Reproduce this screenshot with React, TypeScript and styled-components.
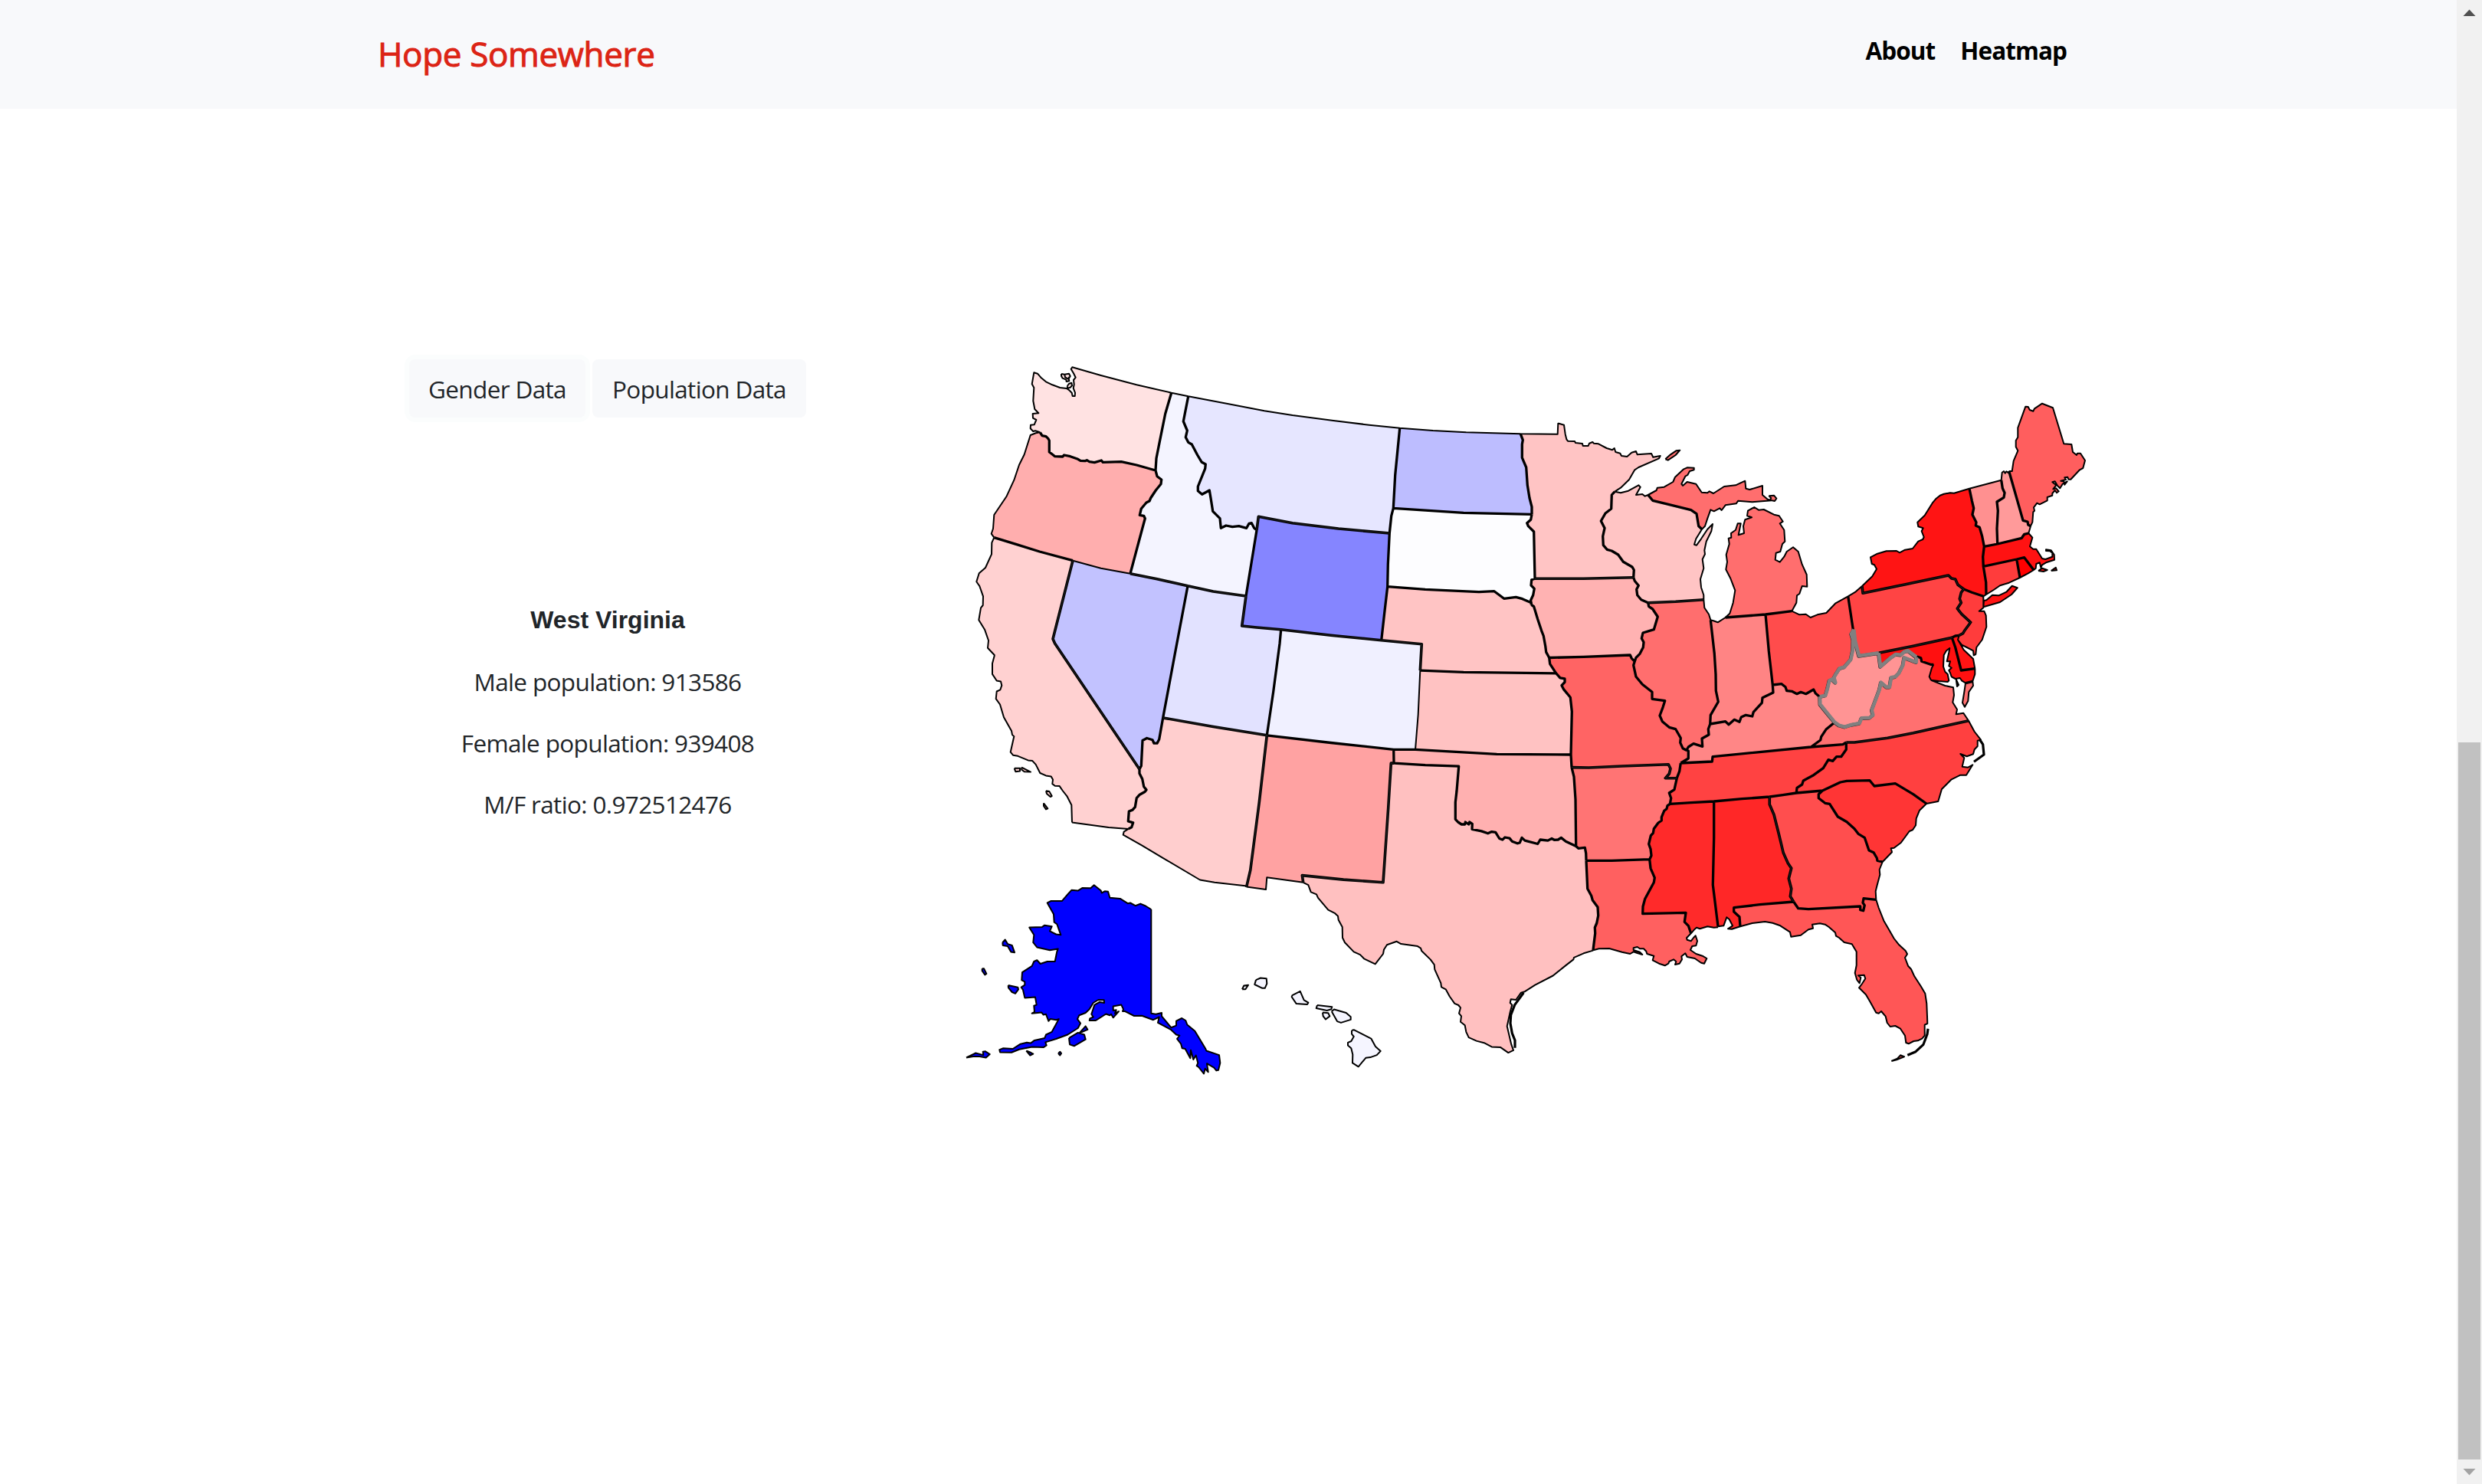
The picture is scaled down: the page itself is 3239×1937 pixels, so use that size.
import React from "react";
import styled, { createGlobalStyle } from "styled-components";

/* ------------------------------------------------------------------ */
/* Map data: shared borders are stored once, as arcs on survey sheets. */
/* ------------------------------------------------------------------ */

type Sheet = { x: number; y: number; sx: number; sy: number };

const TALL = 1568 / 580;

/* Origin and units-per-pixel of each sheet that an arc may refer to. */
const sheets: Record<string, Sheet> = {
  A: { x: 1250, y: 460, sx: 3, sy: 3 },
  B: { x: 1250, y: 840, sx: 3, sy: TALL },
  C: { x: 1620, y: 460, sx: 3, sy: 3 },
  D: { x: 1620, y: 840, sx: 3, sy: TALL },
  E: { x: 2000, y: 520, sx: 3, sy: 3 },
  F: { x: 2040, y: 880, sx: 3, sy: 3 },
  G: { x: 2360, y: 500, sx: 3, sy: 3 },
  H: { x: 2330, y: 820, sx: 3, sy: 3 },
  I: { x: 2420, y: 1080, sx: 3, sy: 3 },
};

/* Outer edges and coast lines. */
const coasts: Record<string, string> = {
  wa: "A 836,158 700,127 560,90 448,58 443,65 453,82 461,98 453,108 455,125 452,140 459,158 458,171 449,171 446,158 438,150 432,145 425,141 400,138 370,127 345,115 325,98 312,83 298,79 290,124 298,138 295,190 301,222 316,238 293,240 294,257 307,264 299,283 285,284 284,298 295,309 303,307 322,313",
  waIsle1: "A 405,84 418,86 435,83 440,93 434,103 436,112 425,114 424,107 410,101 405,92 405,84",
  waIsle2: "A 418,86 420,97 432,104 436,96",
  waIsle3: "A 428,132 436,122 445,119 447,130 440,137 430,140 428,132",
  or: "A 322,313 305,316 284,324 260,400 240,440 220,500 190,565 142,636 138,690 131,710 142,725",
  orNv: "A 450,815 560,845 675,866",
  idN: "A 836,158 902,172",
  ca: "A 142,725 133,745 132,790 108,843 83,865 73,898 85,915 99,955 98,990 90,1000 82,1048 105,1085 120,1128 117,1157 143,1185 B 143,43 135,70 135,108 152,131 168,134 172,148 166,163 152,169 149,195 165,215 180,260 210,308 213,322 220,328 206,383 216,394 235,397 275,412 292,414 305,427 322,457 345,466 365,469 372,480 370,495 380,502 398,503 410,519 428,540 445,570 447,631",
  caMex: "B 447,631 590,649 668,654",
  caIsle1: "B 221,440 243,440 243,450 226,452 221,440",
  caIsle2: "B 250,437 285,453 260,452 250,445 250,437",
  caIsle3: "B 345,520 358,522 368,538 362,541 348,530 345,520",
  caIsle4: "B 336,563 352,582 345,585 336,573 336,563",
  az: "B 668,654 650,664 647,675 720,712 800,755 948,834 1005,843 1125,855 D 20,858",
  mtN: "A 902,172 1060,202 1200,229 C 200,246 360,267 500,284 620,296",
  ndN: "C 620,296 750,306 880,313 1093,319",
  mn: "C 1093,319 1238,320 1240,278 E 103,98 123,104 128,140 133,160 138,167 165,168 168,174 195,177 197,186 218,186 222,176 235,171 240,176 258,178 290,195 312,202 320,195 325,210 343,215 348,225 370,228 388,212 405,207 410,220 465,216 472,230 500,225 495,235 415,270 400,280 378,318 345,350 322,365",
  coKs: "D 700,95 692,250 681,374",
  nmMex: "D 20,858 96,868 100,825 242,843",
  tx: "D 242,843 262,852 272,877 294,885 300,897 340,940 365,951 378,962 380,975 395,1000 396,1038 405,1055 440,1088 465,1098 480,1112 524,1131 555,1095 558,1080 570,1063 608,1051 625,1060 690,1068 702,1075 706,1085 740,1115 755,1133 757,1150 781,1198 783,1212 800,1220 815,1245 835,1270 850,1276 858,1285 852,1305 861,1315 858,1335 875,1347 880,1370 890,1390 920,1402 950,1409 980,1423 1015,1425 1045,1444 1065,1435 1057,1415 1040,1350 1052,1300 1060,1275 1052,1268 1055,1255 1075,1257 1095,1232 1110,1228 1150,1205 1220,1172 1268,1137 1300,1115 1302,1108 1340,1093 1377,1083",
  wiSup: "E 322,365 345,370 375,362 415,340 422,347 405,378 430,375 440,383 452,378",
  wi: "E 663,512 640,550 633,572 642,575 660,550 685,512 705,492 700,520 680,560 673,595 675,610 665,630 670,665 657,708 660,740 670,770 670,788",
  il: "E 670,788 673,820 690,845 697,868",
  in: "E 697,868 708,871 725,877 755,858",
  mi: "E 755,858 772,842 785,800 793,752 775,705 757,670 762,640 758,612 770,570 767,548 778,545 777,528 795,515 803,490 815,490 806,535 828,528 825,500 832,475 858,466 840,460 843,440 868,426 885,437 905,435 945,455 965,460 980,482 968,490 985,515 988,560 978,570 970,600 953,605 950,632 968,641 985,620 995,600 1020,583 1040,600 1055,650 1073,690 1075,737 1055,735 1045,765 1035,772 1033,800 1015,833",
  miUp: "E 452,378 485,360 488,350 515,347 550,327 558,308 590,278 605,271 632,272 632,280 615,285 607,300 598,305 583,335 588,342 605,327 640,335 662,368 685,370 692,364 708,372 750,345 795,340 832,323 835,353 850,357 900,342 900,378 920,395 935,400 860,406 805,401 797,412 755,418 740,438 733,430 710,442 697,436 685,470 675,500 663,512",
  miIsle: "E 925,382 945,380 955,392 948,402 930,398 934,390 925,382",
  royale: "E 520,238 540,220 562,205 577,203 560,222 530,242 520,238",
  oh: "E 1015,833 1045,847 1070,845 1088,858 G 35,907 70,900 105,863 155,835",
  paLake: "G 155,835 185,817 210,795",
  nyLake: "G 210,795 250,757 267,728 258,712 248,708 243,682 270,668 305,658 345,657 357,664 378,653 408,648 430,620 448,612 452,603 443,580 449,568 430,562 427,545 455,518 485,470 500,452 515,440 530,434 555,430 570,431 630,413",
  nySound: "G 696,828 685,835",
  longIsland: "G 685,877 687,852 697,850 720,830 745,832 775,818 797,794 818,802 795,828 750,858 685,877",
  vtN: "G 630,413 755,380",
  nhN: "G 755,380 758,350 765,345 770,353 775,346 783,352 785,345",
  nh: "G 870,560 862,588",
  me: "G 785,345 797,345 803,305 820,265 812,250 812,225 820,212 820,175 850,92 860,93 866,105 880,110 885,100 915,80 957,97 1000,238 1030,240 1035,270 1050,282 1053,275 1065,275 1083,303 1075,333 1062,340 1027,377 1018,377 1015,368 1003,370 1008,378 988,383 1000,385 1003,398 1013,385 995,395 985,412 975,402 965,385 955,388 970,400 958,415 970,412 980,424 972,430 965,420 955,432 955,440 935,447 935,460 905,475 895,470 882,487 885,500 880,505 877,545 870,560",
  ma: "G 862,588 877,605 867,640 880,650 892,650 915,687 928,690 955,680 955,665 945,658 930,657 930,652 950,655 962,672 963,692 930,703 915,712 910,722 905,703 892,708 890,725 882,732",
  vineyard: "G 900,735 915,725 935,732 920,738 900,735",
  nantucket: "G 950,735 968,722 972,733 950,735",
  ri: "G 828,762 860,745 882,732",
  ct: "G 828,762 785,782 750,793 725,810 696,828",
  nj: "G 685,835 685,880 668,893 688,893 695,910 697,955 680,1005 658,1035 655,1062 647,1066 645,1048 620,1035 600,1025 585,1005 590,988",
  de: "H 680,28 675,45 698,85 735,120 742,158",
  mdSea: "H 742,158 742,180 733,208",
  vaSpit: "H 733,208 735,225 718,250 715,285 702,308 693,292 700,250 705,215 733,208",
  mdIsle: "H 668,200 678,222 672,228 668,200",
  mdBay: "H 706,215 690,205 683,195 665,198 650,190 645,175 640,165 650,155 640,148 645,130 632,130 640,95 643,78 630,88 620,105 618,150 625,170 635,180 640,205 635,210 600,207 570,203",
  potomac: "H 580,142 573,155 563,190 570,203",
  va: "H 570,203 625,225 657,232 660,262 655,290 672,318 668,337 697,332 717,362",
  nc: "H 552,687 598,678 612,630 650,592 685,575 708,575 733,535 715,545 692,542 700,508 685,492 710,502 735,493 740,475 752,462 752,440 765,437 740,405 717,362",
  sc: "I 110,135 147,97 143,82 155,80 182,60 215,15 H 498,790 510,772 512,745 525,713 552,687",
  ga: "I 110,135 98,165 100,185 88,230 83,250 85,283",
  fl: "I 85,283 95,315 115,365 135,400 155,435 175,460 200,483 207,496 198,510 210,542 222,555 235,583 260,622 277,650 283,690 285,740 286,768 275,773 275,815 265,827 248,835 232,837 212,847 202,843 198,815 180,788 160,777 140,780 128,765 122,740 105,720 95,728 85,725 60,680 45,655 18,628 30,612 43,592 38,578 15,580 25,588 20,610 10,597 2,570 8,540 8,487 F 1130,1057 1100,1050 1080,1032 1068,1025 1065,1012 1040,990 1025,980 1005,976 975,980 978,995 960,1000 930,1022 892,1028 888,1010 850,985 820,974 790,969 740,975 693,988",
  flKey: "I 145,915 168,905 180,892 195,898 165,910 145,915",
  al: "F 606,988 628,985 640,952 650,960 663,985 645,997 660,998 693,988",
  ms: "F 500,1015 515,998 522,992 535,997 565,988 590,992 606,991",
  la: "F 117,1081 140,1075 180,1074 230,1088 262,1095 275,1087 290,1092 310,1098 300,1088 275,1080 275,1072 290,1068 300,1075 315,1075 325,1085 328,1095 355,1103 350,1120 375,1133 398,1141 412,1133 415,1125 432,1117 442,1125 438,1137 455,1133 465,1117 463,1105 478,1093 485,1107 515,1113 540,1130 552,1133 562,1113 545,1103 520,1095 498,1080 505,1065 520,1063 525,1045 518,1024 510,1032 500,1045 485,1040 483,1033 500,1015",
  ak: "B 757,938 757,1305 775,1308 798,1303 798,1315 835,1355 855,1348 855,1332 877,1322 892,1330 898,1345 928,1367 970,1430 973,1437 1023,1452 1027,1480 1020,1505 1012,1507 1003,1497 975,1482 980,1512 968,1500 963,1518 943,1495 935,1490 940,1480 932,1453 922,1468 912,1435 910,1463 890,1430 878,1428 873,1412 858,1395 868,1383 855,1380 835,1363 783,1338 788,1318 765,1328 720,1313 690,1314 655,1298 645,1298 648,1290 640,1275 608,1280 608,1295 620,1293 615,1305 630,1298 608,1320 600,1308 595,1312 580,1307 540,1330 515,1330 517,1323 530,1318 523,1308 535,1275 555,1265 573,1268 572,1258 550,1257 530,1268 515,1290 500,1303 475,1312 468,1325 480,1340 470,1357 430,1380 385,1395 343,1407 347,1418 335,1425 290,1423 240,1432 210,1443 165,1442 163,1433 178,1428 215,1430 245,1413 270,1408 285,1410 300,1400 340,1392 345,1380 368,1370 380,1350 395,1325 385,1328 362,1325 355,1332 345,1308 335,1310 328,1302 290,1305 300,1300 298,1278 308,1275 303,1248 262,1250 255,1222 248,1213 262,1205 262,1193 250,1188 252,1160 290,1138 298,1122 310,1117 323,1130 350,1122 380,1122 388,1087 392,1077 360,1082 310,1072 295,1055 298,1028 280,1002 330,1000 340,994 368,998 360,1015 385,1026 403,1028 388,990 377,983 375,955 350,915 365,908 408,908 430,885 445,870 470,872 488,862 520,863 533,852 560,872 563,880 575,874 588,875 595,897 635,900 665,917 675,915 695,925 715,918 735,926 757,938",
  akIsle1: "B 175,1055 185,1045 195,1060 212,1065 222,1090 208,1088 195,1068 176,1065 175,1055",
  akIsle2: "B 95,1147 102,1147 112,1165 106,1169 95,1155 95,1147",
  akIsle3: "B 197,1206 235,1213 237,1220 225,1235 212,1230 198,1215 197,1206",
  akIsle4: "B 435,1392 470,1373 495,1380 500,1397 455,1420 438,1415 435,1392",
  akIsle5: "B 475,1375 500,1350 508,1362 475,1375",
  akIsle6: "B 393,1446 400,1440 405,1446 400,1453 393,1446",
  akIsle7: "B 33,1461 70,1445 100,1452 98,1440 108,1439 125,1449 110,1461 85,1457 60,1457 33,1461",
  akIsle8: "B 268,1437 285,1443 295,1448 283,1453 268,1437",
  hi1: "D 3,1220 10,1207 27,1205 16,1220 3,1220",
  hi2: "D 57,1187 75,1180 98,1182 100,1200 92,1216 82,1216 52,1203 57,1187",
  hi3: "D 198,1242 230,1227 245,1258 262,1267 258,1273 235,1272 215,1271 197,1247 198,1242",
  hi4: "D 297,1276 355,1282 352,1290 335,1295 293,1287 297,1276",
  hi5: "D 318,1302 340,1304 346,1315 330,1326 320,1315 318,1302",
  hi6: "D 353,1298 363,1291 410,1303 428,1317 428,1327 390,1338 375,1333 353,1298",
  hi7: "D 432,1365 440,1363 508,1394 525,1422 545,1438 530,1452 505,1460 487,1462 458,1493 435,1480 436,1450 430,1428 417,1418 417,1408 430,1403 440,1387 432,1378 432,1365",
};

/* Borders between two states. */
const borders: Record<string, string> = {
  waOr: "A 322,313 330,326 345,329 354,338 358,345 358,390 366,396 380,407 410,408 416,402 440,407 470,418 480,424 498,425 505,422 515,428 535,431 562,423 568,430 640,428 700,441 774,462",
  waId: "A 836,158 812,240 790,350 777,415 774,462",
  orId: "A 774,462 780,485 797,498 795,515 775,540 755,570 750,582 738,588 718,612 712,637 728,640 733,650 722,690 702,765 675,866",
  orCa: "A 142,725 230,752 320,780 450,815",
  idMt: "A 902,172 883,270 898,306 892,332 902,352 916,360 938,402 955,430 970,438 968,455 940,525 940,542 956,556 985,540 990,570 998,622 1026,650 1030,688 1050,678 1075,683 1100,680 1130,688 1140,670 1150,668 1160,688 1170,696",
  idWy: "A 1170,696 1150,820 1128,954",
  caAz: "B 711,443 711,458 722,478 728,505 738,516 732,523 712,533 700,545 694,577 684,587 670,592 667,627 686,632 680,648 668,654",
  nvAz: "B 711,443 718,432 723,342 740,334 762,340 768,352 780,352 788,338 803,262",
  nvUt: "A 900,914 850,1180 B 803,262",
  utCo: "C 155,1085 D 150,0 125,170 100,324",
  sdWy: "C 580,708 574,830 572,917",
  wyNe: "C 572,917 560,1020 548,1127",
  mtSd: "C 595,610 587,640 580,708",
  mtNd: "C 620,296 602,480 595,610",
  ndMn: "C 1093,319 1102,343 1099,360 1099,412 1115,450 1120,520 1128,570 1137,605 1137,634",
  ndSd: "C 595,610 870,628 1137,634",
  sdMn: "C 1137,634 1133,655 1118,668 1123,680 1145,702 1147,790 1149,886",
  sdIa: "C 1149,886 1136,890 1134,912 1147,925 1142,950 1133,970 1135,988",
  sdNe: "C 572,917 720,928 930,938 990,935 1028,964 1075,958 1100,965 1135,980 1135,988",
  neIa: "C 1135,988 1145,995 1160,1045 1175,1090 1183,1110 1190,1150 D 1193,30 1205,50",
  neMo: "D 1205,50 1208,72 1232,105",
  neKs: "D 700,95 870,101 1232,105",
  coNm: "D 100,324 350,350 596,374",
  coOk: "D 596,374 681,374",
  ksOk: "D 681,374 1000,390 1290,392",
  ksMo: "D 1232,105 1248,121 1266,124 1266,136 1254,148 1262,162 1288,190 1294,240 1290,392",
  okMo: "D 1290,392 1293,437",
  okAr: "D 1293,437 1302,470 1308,550 1310,715",
  okNm: "D 596,374 597,422",
  okTx: "D 597,422 720,429 851,433 843,520 838,560 838,620 848,630 862,638 875,638 877,630 890,638 893,630 904,636 903,655 940,662 965,670 980,664 995,666 1010,688 1022,692 1032,684 1050,687 1060,698 1080,705 1090,703 1098,685 1110,695 1160,707 1170,692 1200,695 1215,688 1225,693 1240,692 1252,685 1270,698 1310,715",
  txAr: "D 1310,715 1320,723 1345,720 1349,740 1350,766",
  txLa: "D 1350,766 F 95,840 110,868 115,885 135,912 137,945 131,975 124,992 125,1015 120,1055 117,1081",
  arLa: "D 1350,766 F 190,730 338,725",
  moIl: "E 400,1030 395,1045 405,1090 430,1120 468,1150 F 348,97 398,104 390,130 378,162 388,185 415,208 440,215 460,250 458,268 468,290 482,298",
  moKy: "F 482,298 490,300 490,330 460,348",
  moTn: "F 460,348 455,380 445,407",
  tnAr: "F 445,407 435,452 415,465 422,485 418,508",
  tnMs: "F 418,508 500,503 590,498",
  tnAl: "F 590,498 700,488 808,480",
  tnGa: "F 808,480 860,473 913,465",
  gaNc: "F 913,465 1015,456",
  arMs: "F 418,508 408,515 405,527 395,535 385,560 385,573 372,582 355,605 352,622 343,632 335,665 342,685 345,710 338,725",
  laMs: "F 338,725 342,760 358,797 355,815 320,880 312,910 311,938 480,934 475,970 490,985 500,1015",
  msAl: "F 590,498 590,640 586,825 606,988",
  alFl: "F 693,988 690,950 668,930 668,914 770,902 902,891",
  gaFl: "F 902,891 920,917 960,920 1163,909 1163,923 1175,926 1180,905 1173,895 1176,878 I 85,283",
  gaSc: "F 1015,456 1000,470 1000,485 1025,505 1043,508 1075,558 1110,578 1140,605 1155,625 1180,640 1197,690 H 345,878 358,900 I 90,130 110,135",
  scNc: "F 1015,456 1085,423 H 240,598 330,596 348,618 430,608 500,650 552,687",
  tnNc: "H 238,447 238,475 218,503 200,503 185,520 168,515 148,548 110,575 70,597 65,612 45,625 F 913,465",
  tnVa: "H 100,465 225,455 238,447",
  tnKy: "F 460,348 583,342 585,323 H 100,465",
  vaKy: "H 100,465 137,438 140,425 160,395 193,368",
  kyOh: "F 820,42 855,38 870,50 875,65 895,67 915,77 930,70 950,77 980,60 988,75 H 133,268",
  kyIn: "F 575,195 635,185 648,197 670,178 690,187 697,168 715,160 740,165 745,148 778,112 780,92 822,72 820,42",
  inOh: "E 912,846 925,990 940,1122",
  kyIl: "F 482,298 490,285 510,272 545,283 543,252 570,237 568,215 575,195",
  ilIn: "F 575,195 577,160 607,108 598,65 597,0 E 712,1000 697,868",
  iaIl: "E 452,800 455,815 470,825 490,855 475,905 432,918 427,940 435,955 433,975 420,1000 405,1015 400,1030",
  wiIa: "E 395,701 400,715 415,733 407,748 410,770 425,788 452,800",
  iaMo: "D 1205,50 E 200,1012 382,1005 388,1018 400,1030",
  mnWi: "E 322,365 310,378 308,432 285,450 268,480 282,508 275,540 277,575 292,592 310,597 335,612 355,640 390,660 397,672 395,701",
  wiMi: "E 452,378 470,400 520,412 620,437 642,452 650,500 663,512",
  inMi: "E 755,858 912,846",
  ohMi: "E 912,846 1015,833",
  nyVt: "G 630,413 640,460 647,490 642,515 657,545 655,558 670,565 680,600 688,640",
  nyMa: "G 688,640 683,680 685,718",
  nyCt: "G 685,718 695,780 696,828",
  nyNj: "G 608,807 640,820 685,835",
  paDe: "G 562,997 575,990 590,988",
  deMd: "H 652,37 665,75 688,165 742,158",
  mdVaE: "H 733,208 706,215",
  mdVa: "H 513,110 530,116 533,130 568,142 580,142",
  vtNh: "G 755,380 760,412 768,430 765,448 738,465 742,500 738,570 740,630",
  vtMa: "G 688,640 740,630",
  nhMa: "G 740,630 835,607 845,592 862,588",
  nhMe: "G 785,345 840,538 858,543 860,555 870,560",
  maCt: "G 685,718 815,690",
  maRi: "G 815,690 845,683 882,732",
  ctRi: "G 815,690 828,762",
  ohPa: "G 155,835 175,965",
};

/* Borders where the two outlines run side by side and leave a sliver. */
const doubles: Record<string, string> = {
  nvId: "A 675,866 780,887 900,914",
  utId: "A 900,914 1000,936 1128,954",
  mtWy: "A 1170,696 1177,643 C 200,668 380,690 580,708",
  utWy: "A 1128,954 1112,1071 C 60,1077 155,1085",
  coWy: "C 155,1085 350,1108 548,1127",
  neCo: "C 548,1127 706,1142 D 700,95",
  caNv: "A 450,815 372,1122 380,1140 B 711,443",
  utAz: "B 803,262 1000,293 D 100,324",
  azNm: "D 100,324 70,560 35,800 20,858",
  nmTx: "D 597,422 586,422 575,580 555,843 400,833 238,818 242,843",
  iaMn: "C 1149,886 E 200,706 395,701",
  wiIl: "E 452,800 560,796 670,788",
  moAr: "D 1293,437 F 100,366 230,360 412,353 420,370 415,390 400,407 445,407",
  alGa: "F 808,480 808,510 825,550 845,630 862,700 880,740 893,760 883,800 893,840 889,870 902,891",
  paNy: "G 210,795 213,823 380,788 548,753 560,765 575,768 585,790 608,807",
  njPa: "G 608,807 598,820 592,845 598,860 583,883 600,905 635,937 612,968 605,980 590,988",
  mdPa: "H 365,97 500,70 652,37",
  ncVa: "H 238,447 270,447 400,430 500,410 717,362",
};

/* Outline of the state that is under the pointer. */
const selected: Record<string, string> = {
  wvKy: "H 193,368 155,322 136,298 135,268",
  wvOh: "H 135,268 157,263 165,235 172,205 182,200 196,213 190,193 197,180 212,157 230,152 256,122 264,85 265,45 258,22 268,5",
  wvPa: "H 268,5 273,50 288,108 365,97",
  wvMd: "H 365,97 372,150 410,117 432,102 452,104 465,92 480,88 513,113",
  wvVa: "H 513,113 512,133 465,115 460,145 445,175 430,190 414,193 408,230 395,230 374,212 368,240 338,320 343,340 330,350 298,352 290,372 258,378 232,386 210,380 193,368",
};

/* Sand bars and keys, which are all outline. */
const bars: string[] = [
  "D 1105,1232 1070,1275 1055,1310 1053,1340 1060,1375 1071,1400 1071,1427",
  "I 288,788 285,810 270,850 240,878 208,892",
  "H 760,435 773,455 777,495 738,523",
];

type State = { id: string; fill: string; rings: string[] };

/* A minus sign means that the arc is followed backwards. */
const states: State[] = [
  { id: "WA", fill: "#ffe2e2", rings: ["wa waOr -waId", "waIsle1", "waIsle3"] },
  { id: "OR", fill: "#ffaeae", rings: ["or orCa orNv -orId -waOr"] },
  { id: "CA", fill: "#ffd1d1", rings: ["ca caMex -caAz -caNv -orCa", "caIsle1", "caIsle2", "caIsle3", "caIsle4"] },
  { id: "NV", fill: "#c2c2ff", rings: ["orNv nvId nvUt -nvAz -caNv"] },
  { id: "ID", fill: "#f4f4ff", rings: ["idN idMt idWy -utId -nvId -orId -waId"] },
  { id: "MT", fill: "#e6e6ff", rings: ["mtN mtNd mtSd -mtWy -idMt"] },
  { id: "WY", fill: "#8585ff", rings: ["mtWy sdWy wyNe -coWy -utWy -idWy"] },
  { id: "UT", fill: "#e2e2ff", rings: ["utId utWy utCo -utAz -nvUt"] },
  { id: "CO", fill: "#f0f0ff", rings: ["coWy neCo coKs -coOk -coNm -utCo"] },
  { id: "AZ", fill: "#ffcece", rings: ["utAz azNm -az -caAz nvAz"] },
  { id: "NM", fill: "#ffa2a2", rings: ["coNm okNm nmTx -nmMex -azNm"] },
  { id: "ND", fill: "#bdbdff", rings: ["ndN ndMn -ndSd -mtNd"] },
  { id: "SD", fill: "#fdfdff", rings: ["ndSd sdMn sdIa -sdNe -sdWy -mtSd"] },
  { id: "NE", fill: "#ffc4c4", rings: ["sdNe neIa neMo -neKs -neCo -wyNe"] },
  { id: "KS", fill: "#ffc2c2", rings: ["neKs ksMo -ksOk -coKs"] },
  { id: "OK", fill: "#ffb0b0", rings: ["coOk ksOk okMo okAr -okTx -okNm"] },
  { id: "TX", fill: "#ffc0c0", rings: ["okTx txAr txLa -tx -nmTx"] },
  { id: "MN", fill: "#ffc4c4", rings: ["mn mnWi -iaMn -sdMn -ndMn"] },
  { id: "IA", fill: "#ffb2b2", rings: ["iaMn wiIa iaIl -iaMo -neIa -sdIa"] },
  { id: "MO", fill: "#ff6464", rings: ["iaMo moIl moKy moTn -moAr -okMo -ksMo -neMo"] },
  { id: "AR", fill: "#ff7474", rings: ["moAr tnAr arMs -arLa -txAr -okAr"] },
  { id: "LA", fill: "#ff6060", rings: ["arLa laMs -la -txLa"] },
  { id: "WI", fill: "#ffc4c4", rings: ["wiSup wiMi wi -wiIl -wiIa -mnWi"] },
  { id: "IL", fill: "#ff6e6e", rings: ["wiIl il -ilIn -kyIl -moIl -iaIl"] },
  { id: "MI", fill: "#ff6e6e", rings: ["mi -ohMi -inMi", "miUp -wiMi", "miIsle", "royale"] },
  { id: "IN", fill: "#ff8484", rings: ["in inMi inOh -kyIn ilIn"] },
  { id: "OH", fill: "#ff4c4c", rings: ["ohMi oh ohPa -wvOh -kyOh -inOh"] },
  { id: "KY", fill: "#ff8686", rings: ["kyIl kyIn kyOh -wvKy -vaKy -tnKy -moKy"] },
  { id: "TN", fill: "#ff4242", rings: ["tnKy tnVa tnNc -tnGa -tnAl -tnMs -tnAr -moTn"] },
  { id: "MS", fill: "#ff2a2a", rings: ["tnMs msAl -ms -laMs -arMs"] },
  { id: "AL", fill: "#ff2727", rings: ["tnAl alGa -alFl -al -msAl"] },
  { id: "GA", fill: "#ff4e4e", rings: ["tnGa gaNc gaSc ga -gaFl -alGa"] },
  { id: "FL", fill: "#ff5656", rings: ["alFl gaFl fl", "flKey"] },
  { id: "SC", fill: "#ff3535", rings: ["scNc -sc -gaSc"] },
  { id: "NC", fill: "#ff4040", rings: ["ncVa -nc -scNc -gaNc -tnNc"] },
  { id: "VA", fill: "#ff7070", rings: ["mdVa potomac va -ncVa -tnVa vaKy -wvVa", "vaSpit"] },
  { id: "PA", fill: "#ff4444", rings: ["paLake paNy njPa -paDe -mdPa -wvPa -ohPa"] },
  { id: "NY", fill: "#ff1414", rings: ["nyLake nyVt nyMa nyCt nySound -nyNj -paNy", "longIsland"] },
  { id: "VT", fill: "#ff9090", rings: ["vtN vtNh -vtMa -nyVt"] },
  { id: "NH", fill: "#ff9a9a", rings: ["nhN nhMe nh -nhMa -vtNh"] },
  { id: "ME", fill: "#ff5e5e", rings: ["me -nhMe"] },
  { id: "MA", fill: "#ff1212", rings: ["vtMa nhMa ma -maRi -maCt -nyMa", "vineyard", "nantucket"] },
  { id: "CT", fill: "#ff3c3c", rings: ["maCt ctRi ct -nyCt"] },
  { id: "RI", fill: "#ff0000", rings: ["maRi -ri -ctRi"] },
  { id: "NJ", fill: "#ff3c3c", rings: ["nyNj nj -njPa"] },
  { id: "DE", fill: "#ff1414", rings: ["paDe de -deMd"] },
  { id: "MD", fill: "#ff1010", rings: ["mdPa deMd mdSea mdVaE mdBay -potomac -mdVa -wvMd", "mdIsle"] },
  { id: "AK", fill: "#0000ff", rings: ["ak", "akIsle1", "akIsle2", "akIsle3", "akIsle4", "akIsle5", "akIsle6", "akIsle7", "akIsle8"] },
  { id: "HI", fill: "#f5f5ff", rings: ["hi1", "hi2", "hi3", "hi4", "hi5", "hi6", "hi7"] },
  { id: "WV", fill: "#ff9494", rings: ["wvPa wvMd wvVa wvKy wvOh"] },
];

type Point = [number, number];

function parseArc(text: string): Point[] {
  let sheet = sheets.A;
  const points: Point[] = [];
  for (const token of text.split(" ")) {
    if (sheets[token]) {
      sheet = sheets[token];
      continue;
    }
    const [px, py] = token.split(",").map(Number);
    points.push([sheet.x + px / sheet.sx, sheet.y + py / sheet.sy]);
  }
  return points;
}

const line = (points: Point[]) =>
  "M" + points.map(([x, y]) => `${x.toFixed(1)} ${y.toFixed(1)}`).join("L");

const allArcs: Record<string, string> = { ...coasts, ...borders, ...doubles, ...selected };

function ringPath(ring: string): string {
  const points = ring.split(" ").flatMap((name) =>
    name.startsWith("-") ? parseArc(allArcs[name.slice(1)]).reverse() : parseArc(allArcs[name]),
  );
  return line(points) + "Z";
}

const network = (arcs: string[]) => arcs.map((arc) => line(parseArc(arc))).join("");

/* ------------------------------------------------------------------ */
/* Styles                                                              */
/* ------------------------------------------------------------------ */

const GlobalStyle = createGlobalStyle`
  * { box-sizing: border-box; }
  body {
    margin: 0;
    background: #fff;
    color: #212529;
    font-family: "Open Sans", "Noto Sans", sans-serif;
    font-size: 31.5px;
    line-height: 48px;
  }
`;

const Window = styled.div`
  display: flex;
  height: 1937px;
  overflow: hidden;
`;

const Page = styled.div`
  flex: 1;
  min-width: 0;
`;

const Header = styled.header`
  display: flex;
  justify-content: space-between;
  height: 142px;
  padding: 0 509px 0 493px;
  background: #f8f9fb;
`;

const Brand = styled.a`
  padding-top: 37px;
  color: #dc2415;
  font-size: 44px;
  font-weight: 500;
  line-height: 66px;
  letter-spacing: -0.35px;
  -webkit-text-stroke: 1px #dc2415;
`;

const Nav = styled.nav`
  display: flex;
  gap: 33px;
  padding-top: 42px;
`;

const NavLink = styled.a`
  color: #000;
  font-weight: 700;
  letter-spacing: -0.95px;
`;

const Main = styled.main`
  display: grid;
  grid-template-columns: 598px 1470px;
  column-gap: 168px;
  padding: 327px 0 0 494px;
`;

const Side = styled.section`
  display: flex;
  flex-direction: column;
  align-items: center;
  gap: 240px;
`;

const ButtonRow = styled.div`
  display: flex;
  gap: 9px;
`;

const DataButton = styled.button<{ $focused?: boolean; $width: number }>`
  width: ${(p) => p.$width}px;
  height: 76px;
  padding: 2px 0 0;
  border: 0;
  border-radius: 8px;
  background: #f8f9fb;
  box-shadow: ${(p) => (p.$focused ? "0 0 0 6px #fbfdfd" : "none")};
  color: #212529;
  font: inherit;
  letter-spacing: -0.65px;
  white-space: nowrap;
`;

const Details = styled.div`
  display: flex;
  flex-direction: column;
  align-items: center;
  gap: 32px;
`;

const StateName = styled.strong`
  font-family: "Liberation Sans", Arial, sans-serif;
  font-size: 32px;
  font-weight: 700;
`;

const Fact = styled.p`
  margin: 0;
  padding-top: 1px;
  height: 48px;
  letter-spacing: -0.65px;
  white-space: nowrap;
`;

const MapArea = styled.svg`
  display: block;
  width: 1470px;
  height: 950px;
`;

const Stroke = styled.path<{ $width: number; $color?: string }>`
  fill: none;
  stroke: ${(p) => p.$color ?? "#000"};
  stroke-width: ${(p) => p.$width}px;
  stroke-linejoin: round;
`;

const Scrollbar = styled.div`
  display: flex;
  flex-direction: column;
  align-items: center;
  width: 33px;
  background: #f1f1f1;
`;

const Arrow = styled.svg`
  display: block;
  width: 33px;
  height: 32px;
`;

const Track = styled.div`
  flex: 1;
  display: flex;
  flex-direction: column;
  justify-content: flex-end;
`;

const Thumb = styled.div`
  width: 29px;
  height: 936px;
  background: #c1c1c1;
`;

/* ------------------------------------------------------------------ */
/* Components                                                          */
/* ------------------------------------------------------------------ */

function UsaMap() {
  const outline = network(Object.values(selected));
  return (
    <MapArea viewBox="1260 469 1470 950">
      {states.map((s) => (
        <path key={s.id} fill={s.fill} d={s.rings.map(ringPath).join("")} />
      ))}
      <Stroke $width={2} d={network(Object.values(coasts))} />
      <Stroke $width={3.3} d={network(Object.values(borders))} />
      <Stroke $width={3.6} d={network(Object.values(doubles))} />
      <Stroke $width={0.5} $color="#444" d={network(Object.values(doubles))} />
      <Stroke $width={3.2} d={network(bars)} />
      <Stroke $width={4.4} $color="#222" d={outline} transform="translate(-0.5 0.5)" />
      <Stroke $width={4.6} $color="#808080" d={outline} />
    </MapArea>
  );
}

export default function App() {
  return (
    <>
      <GlobalStyle />
      <Window>
        <Page>
          <Header>
            <Brand>Hope Somewhere</Brand>
            <Nav>
              <NavLink>About</NavLink>
              <NavLink>Heatmap</NavLink>
            </Nav>
          </Header>
          <Main>
            <Side>
              <ButtonRow>
                <DataButton $width={230} $focused>
                  Gender Data
                </DataButton>
                <DataButton $width={279}>Population Data</DataButton>
              </ButtonRow>
              <Details>
                <StateName>West Virginia</StateName>
                <Fact>Male population: 913586</Fact>
                <Fact>Female population: 939408</Fact>
                <Fact>M/F ratio: 0.972512476</Fact>
              </Details>
            </Side>
            <UsaMap />
          </Main>
        </Page>
        <Scrollbar>
          <Arrow viewBox="0 0 33 32">
            <path d="M8.5 21L16.5 12.5L24.5 21Z" fill="#505050" />
          </Arrow>
          <Track>
            <Thumb />
          </Track>
          <Arrow viewBox="0 0 33 32">
            <path d="M8.5 12L16.5 20.5L24.5 12Z" fill="#a3a3a3" />
          </Arrow>
        </Scrollbar>
      </Window>
    </>
  );
}
